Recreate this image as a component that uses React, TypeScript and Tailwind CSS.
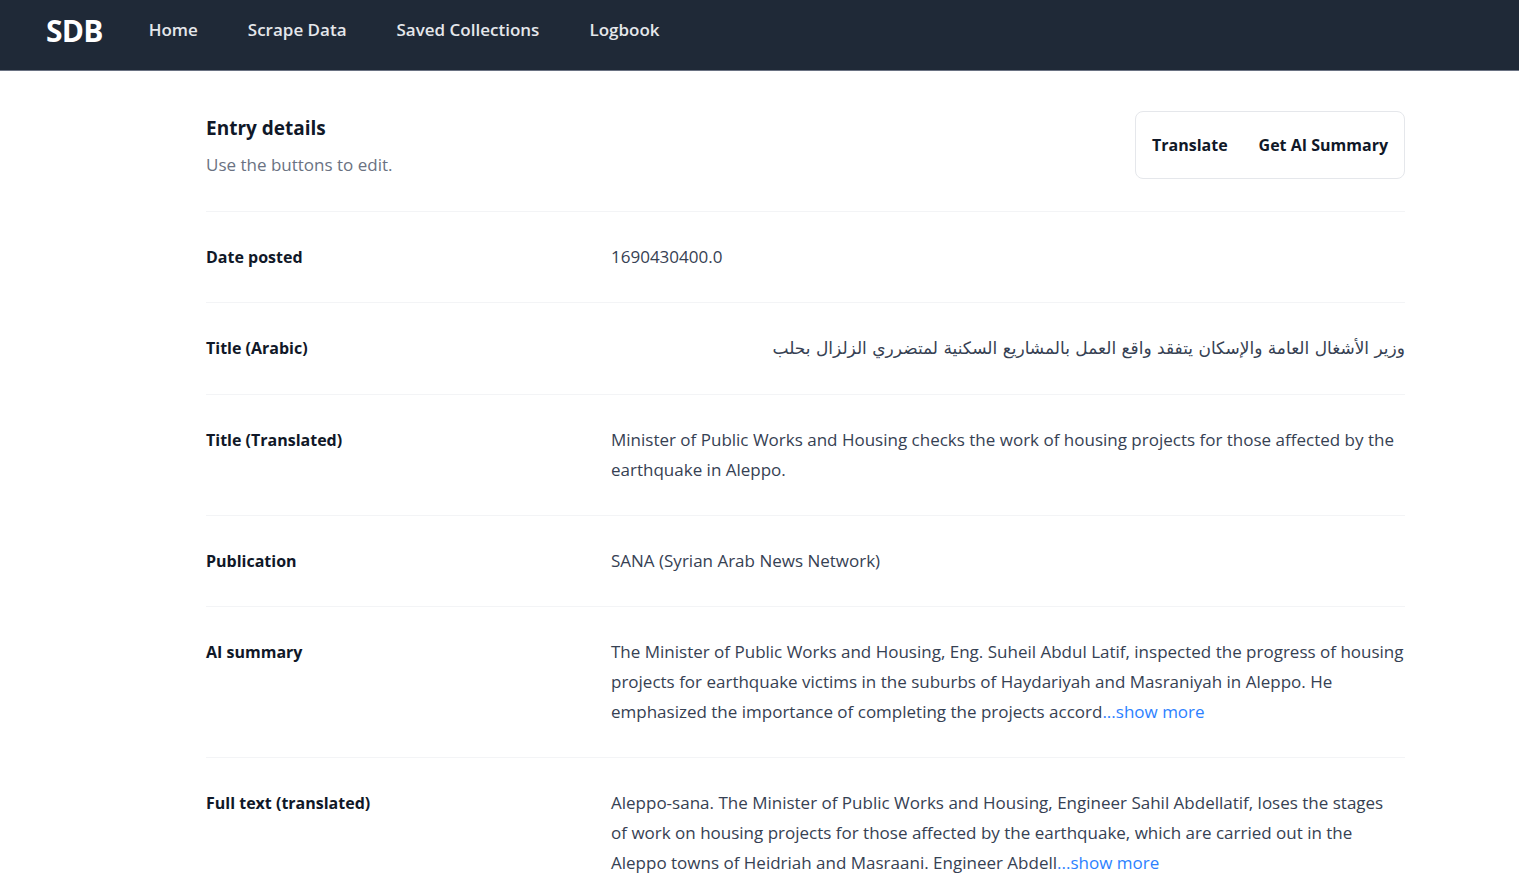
const rows: { label: string; value: React.ReactNode; arabic?: boolean }[] = [
  { label: 'Date posted', value: '1690430400.0' },
  {
    label: 'Title (Arabic)',
    value: 'وزير الأشغال العامة والإسكان يتفقد واقع العمل بالمشاريع السكنية لمتضرري الزلزال بحلب',
    arabic: true,
  },
  {
    label: 'Title (Translated)',
    value: 'Minister of Public Works and Housing checks the work of housing projects for those affected by the earthquake in Aleppo.',
  },
  { label: 'Publication', value: 'SANA (Syrian Arab News Network)' },
  {
    label: 'AI summary',
    value: (
      <>
        The Minister of Public Works and Housing, Eng. Suheil Abdul Latif, inspected the progress of housing projects for
        earthquake victims in the suburbs of Haydariyah and Masraniyah in Aleppo. He emphasized the importance of
        completing the projects accord
        <button type="button" className="text-blue-500">...show more</button>
      </>
    ),
  },
  {
    label: 'Full text (translated)',
    value: (
      <>
        Aleppo-sana. The Minister of Public Works and Housing, Engineer Sahil Abdellatif, loses the stages of{'\u00a0'}work on
        housing projects for those affected by the earthquake, which are carried out in the Aleppo towns of Heidriah and
        Masraani. Engineer Abdell
        <button type="button" className="text-blue-500">...show more</button>
      </>
    ),
  },
];

const App = () => {
  return (
    <div className="min-h-screen bg-white font-['Open_Sans',sans-serif]">
      <header className="h-[71px] border-b border-gray-500 bg-[#1f2937]">
        <div className="flex h-full items-center px-[46px] pb-[10px]">
          <span className="mr-[46px] text-[30px] font-bold tracking-tight text-white">SDB</span>
          <nav className="flex items-center gap-[50px] text-[17px] font-semibold text-gray-200">
            <a href="#">Home</a>
            <a href="#">Scrape Data</a>
            <a href="#">Saved Collections</a>
            <a href="#">Logbook</a>
          </nav>
        </div>
      </header>

      <main className="pl-[206px] pr-[114px] pt-[40px]">
        <div className="flex items-start justify-between pb-[32px]">
          <div className="pt-[3px]">
            <h3 className="text-[19px] font-bold leading-7 text-gray-900">Entry details</h3>
            <p className="mt-[11px] text-[17px] leading-6 text-gray-500">Use the buttons to edit.</p>
          </div>
          <div className="flex items-center gap-[31px] rounded-lg border border-gray-200 px-4 py-[21px] text-[16px] font-bold text-gray-900">
            <button type="button">Translate</button>
            <button type="button">Get AI Summary</button>
          </div>
        </div>

        <dl className="border-t border-gray-100">
          {rows.map((row) => (
            <div key={row.label} className="grid grid-cols-3 gap-4 border-b border-gray-100 py-[30px]">
              <dt className="text-[16px] font-bold leading-[30px] text-gray-900">{row.label}</dt>
              <dd
                className={
                  row.arabic
                    ? "col-span-2 text-right font-['DejaVu_Sans',sans-serif] text-[17px] leading-[31px] text-gray-700"
                    : 'col-span-2 text-[17px] leading-[30px] text-gray-700'
                }
                dir={row.arabic ? 'rtl' : undefined}
              >
                {row.value}
              </dd>
            </div>
          ))}
        </dl>
      </main>
    </div>
  );
};

export default App;
